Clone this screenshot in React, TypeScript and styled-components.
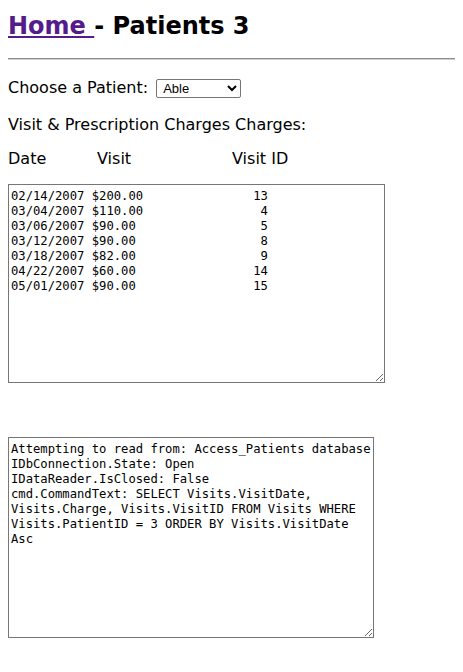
import React from "react";
import styled, { createGlobalStyle } from "styled-components";

const Global = createGlobalStyle`
  html, body {
    overflow: visible;
  }
  body {
    margin: 8px;
    font-family: "DejaVu Sans", Verdana, sans-serif;
    font-size: 16px;
    color: #000;
    background: #fff;
  }
`;

const Title = styled.h1`
  font-size: 24px;
  font-weight: bold;
  margin: 3px 0 0 0;
  line-height: 30px;
`;

const HomeLink = styled.a`
  color: #551a8b;
  text-decoration: underline;
`;

const Rule = styled.div`
  box-sizing: border-box;
  border-top: 1px solid #8e8e8e;
  border-bottom: 1px solid #cfcfcf;
  margin: 17px -20px 0 0;
  height: 2px;
`;

const Line = styled.div<{ $top: number }>`
  margin-top: ${(p) => p.$top}px;
  line-height: 20px;
  display: flex;
  align-items: center;
`;

const Select = styled.select`
  margin-left: 8px;
  width: 85px;
  height: 19px;
  font-family: "Liberation Sans", Arial, sans-serif;
  font-size: 13px;
  border: 1px solid #767676;
  border-radius: 2px;
  background: #fff;
  padding: 0 2px;
`;

const Headers = styled.div`
  display: grid;
  grid-template-columns: 89px 135px auto;
  margin-top: 14px;
  line-height: 20px;
`;

const Area = styled.textarea<{ $w: number; $h: number; $top: number }>`
  display: block;
  box-sizing: border-box;
  width: ${(p) => p.$w}px;
  height: ${(p) => p.$h}px;
  margin-top: ${(p) => p.$top}px;
  font-family: "DejaVu Sans Mono", "Liberation Mono", monospace;
  font-size: 12.2px;
  line-height: 15px;
  padding: 4px 2px 2px 2px;
  border: 1px solid #767676;
  color: #000;
  resize: both;
  overflow: hidden;
`;

const visits = [
  ["02/14/2007", "$200.00", "13"],
  ["03/04/2007", "$110.00", "4"],
  ["03/06/2007", "$90.00", "5"],
  ["03/12/2007", "$90.00", "8"],
  ["03/18/2007", "$82.00", "9"],
  ["04/22/2007", "$60.00", "14"],
  ["05/01/2007", "$90.00", "15"],
];

const visitText = visits
  .map(([d, c, id]) => {
    const left = `${d} ${c}`;
    return left + " ".repeat(35 - left.length - id.length) + id;
  })
  .join("\n");

const logText =
  "Attempting to read from: Access_Patients database\nIDbConnection.State: Open\nIDataReader.IsClosed: False\ncmd.CommandText: SELECT Visits.VisitDate, Visits.Charge, Visits.VisitID FROM Visits WHERE Visits.PatientID = 3 ORDER BY Visits.VisitDate Asc";

export default function App() {
  return (
    <>
      <Global />
      <Title>
        <HomeLink href="#">Home </HomeLink>- Patients 3
      </Title>
      <Rule role="separator" />
      <Line $top={18}>
        Choose a Patient:
        <Select defaultValue="Able">
          <option>Able</option>
        </Select>
      </Line>
      <Line $top={17}>Visit &amp; Prescription Charges Charges:</Line>
      <Headers>
        <span>Date</span>
        <span>Visit</span>
        <span>Visit ID</span>
      </Headers>
      <Area $w={377} $h={199} $top={15} readOnly value={visitText} />
      <Area $w={366} $h={201} $top={54} readOnly value={logText} />
    </>
  );
}
